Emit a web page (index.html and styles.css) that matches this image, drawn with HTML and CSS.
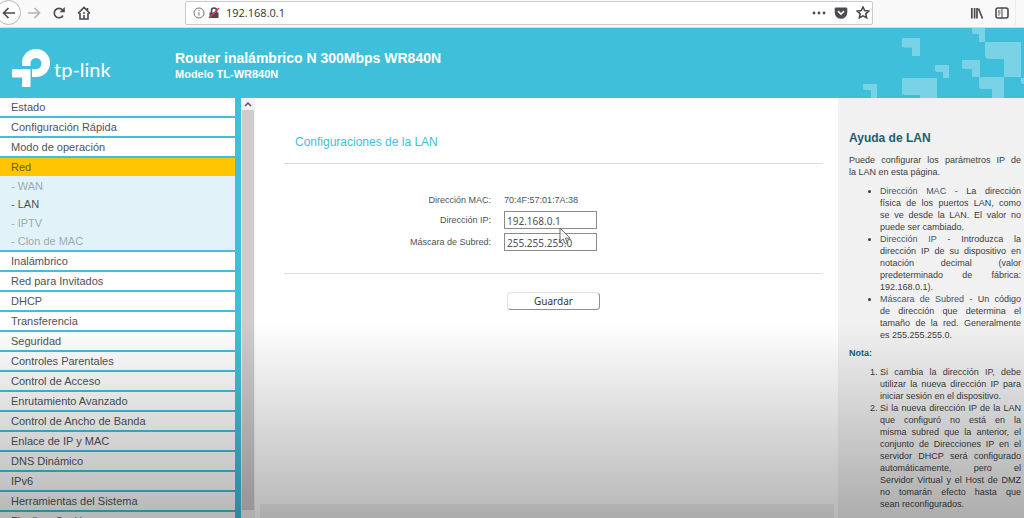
FILE: index.html
```html
<!DOCTYPE html>
<html lang="es">
<head>
<meta charset="utf-8">
<title>TL-WR840N</title>
<link rel="stylesheet" href="styles.css">
</head>
<body>
<div class="window">
  <div class="toolbar">
    <div class="nav">
      <button class="icon-button back" aria-label="Atrás"><svg width="14" height="14" viewBox="0 0 14 14"><path d="M13 7H2M6.500 2L1.500 7l5 5"/></svg></button>
      <button class="icon-button forward" aria-label="Adelante"><svg width="14" height="14" viewBox="0 0 14 14"><path d="M1 7h11M7.500 2l5 5-5 5"/></svg></button>
      <button class="icon-button" aria-label="Recargar"><svg width="14" height="14" viewBox="0 0 14 14"><path d="M11 9.500A4.700 4.700 0 1 1 10.500 4"/><path class="solid" d="M12.800 1v5.300H7.500z"/></svg></button>
      <button class="icon-button" aria-label="Inicio"><svg width="14" height="14" viewBox="0 0 14 14"><path d="M1 7.500L7 1.500l6 6M3 7v6h8V7M7 9v4M10.500 2v2"/><path d="M6 7h2"/></svg></button>
    </div>
    <div class="address">
      <svg width="12" height="12" viewBox="0 0 12 12" class="info"><circle cx="6" cy="6" r="5"/><path d="M6 5.300v3.400M6 3v1.200"/></svg>
      <svg width="12" height="12" viewBox="0 0 12 12"><path class="solid" d="M1.500 5.500h9V11h-9z"/><path d="M3.500 6V3.500a2.500 2.500 0 0 1 5 0V6"/><path class="strike" d="M1 11L11 1"/></svg>
      <input class="url" aria-label="Dirección" value="192.168.0.1">
      <button class="icon-button small" aria-label="Acciones"><svg width="14" height="12" viewBox="0 0 14 12"><circle class="solid" cx="2" cy="6" r="1.400"/><circle class="solid" cx="7" cy="6" r="1.400"/><circle class="solid" cx="12" cy="6" r="1.400"/></svg></button>
      <button class="icon-button small" aria-label="Pocket"><svg width="14" height="12" viewBox="0 0 14 12"><path class="solid" d="M2 .5h10q1.300 0 1.300 1.300V5.500a6.200 6.200 0 0 1-12.600 0V1.800Q.700.500 2 .5z"/><path class="notch" d="M4 4.200l3 2.900 3-2.900"/></svg></button>
      <button class="icon-button small" aria-label="Marcador"><svg width="14" height="13" viewBox="0 0 14 13"><path d="M7 1l1.700 3.600 4 .5-2.900 2.700.8 4L7 9.900l-3.600 1.900.8-4L1.300 5.100l4-.5z"/></svg></button>
    </div>
    <div class="tools">
      <button class="icon-button small" aria-label="Biblioteca"><svg width="14" height="12" viewBox="0 0 14 12"><path class="thick" d="M1.800 1v10.500M4.600 1v10.500M7 1v10.500M8.500 1.500l4 10"/></svg></button>
      <button class="icon-button small" aria-label="Barra lateral"><svg width="14" height="12" viewBox="0 0 14 12"><rect x="1" y="1" width="12" height="10" rx="2"/><path class="thin" d="M7 1v10M3 4h2.500M3 6h2.500M3 8h1.500"/></svg></button>
    </div>
  </div>

  <header class="banner">
    <div class="logo">
      <svg width="38" height="39" viewBox="0 0 38 39"><path d="M10 17V14a14 14 0 1 1 14 14H20V20h4a5.500 5.500 0 1 0-5.500-5.500V17z"/><path d="M1 20h17.500v17.300q0 .7-.7.7h-7.100q-.7 0-.7-.7V28.500H1q-1 0-1-1V21q0-1 1-1z"/></svg>
      <span class="wordmark">tp-link</span>
    </div>
    <div class="titles">
      <h1>Router inalámbrico N 300Mbps WR840N</h1>
      <p>Modelo TL-WR840N</p>
    </div>
    <svg class="pattern" width="164" height="70" viewBox="0 0 164 70"><path d="M42 11q0-1 1-1h17v18h-8v-8.500h-8q-2 0-2-2zM3 57q0-1 1-1h13v14h-6v-8H5q-2 0-2-2zM42 51q0-1 1-1h34v20H60v-3H45q-3 0-3-3zM75 38q0-1 1-1h13v13h-6v-6h-6q-2 0-2-2zM102 33q0-1 1-1h17v17h-8v-8h-8q-2 0-2-2zM112 0h13v14h-6V6h-5q-2 0-2-2zM125 15q0-1 1-1h35v35h-17V31h-15q-4 0-4-4zM119 50q0-1 1-1h24v21h-12V61h-10q-3 0-3-3zM161 50h3v6h-1q-2 0-2-2z"/></svg>
  </header>

  <div class="page">
    <nav class="menu">
      <a href="#">Estado</a>
      <a href="#">Configuración Rápida</a>
      <a href="#">Modo de operación</a>
      <a href="#" class="selected">Red</a>
      <div class="submenu">
        <a href="#">- WAN</a>
        <a href="#" class="current">- LAN</a>
        <a href="#">- IPTV</a>
        <a href="#">- Clon de MAC</a>
      </div>
      <a href="#">Inalámbrico</a>
      <a href="#">Red para Invitados</a>
      <a href="#">DHCP</a>
      <a href="#">Transferencia</a>
      <a href="#">Seguridad</a>
      <a href="#">Controles Parentales</a>
      <a href="#">Control de Acceso</a>
      <a href="#">Enrutamiento Avanzado</a>
      <a href="#">Control de Ancho de Banda</a>
      <a href="#">Enlace de IP y MAC</a>
      <a href="#">DNS Dinámico</a>
      <a href="#">IPv6</a>
      <a href="#">Herramientas del Sistema</a>
      <a href="#">Finalizar Sesión</a>
    </nav>
    <div class="scrollbar">
      <svg width="12" height="12" viewBox="0 0 12 12"><path d="M3 8l3-3 3 3"/></svg>
      <div class="thumb"></div>
    </div>
    <main class="content">
      <form class="settings">
        <h2>Configuraciones de la LAN</h2>
        <div class="fields">
          <span class="label">Dirección MAC:</span>
          <span class="value">70:4F:57:01:7A:38</span>
          <label class="label" for="ip">Dirección IP:</label>
          <div class="field">
            <input id="ip" value="192.168.0.1">
            <svg class="pointer" width="12" height="19" viewBox="0 0 12 19"><path d="M1 1v14l3.200-3 2 4.800 2.200-1-2-4.600H11z"/></svg>
          </div>
          <label class="label" for="mask">Máscara de Subred:</label>
          <div class="field"><input id="mask" value="255.255.255.0"></div>
        </div>
        <div class="actions"><button type="button" class="save">Guardar</button></div>
      </form>
      <div class="status"></div>
    </main>
    <aside class="help">
      <h2>Ayuda de LAN</h2>
      <p class="lines">Puede configurar los parámetros IP de <span class="end">la LAN en esta página.</span></p>
      <ul class="lines">
        <li><b>Dirección MAC</b> - La dirección<br>física de los puertos LAN, como<br>se ve desde la LAN. El valor no <span class="end">puede ser cambiado.</span></li>
        <li><b>Dirección IP</b> - Introduzca la<br>dirección IP de su dispositivo en<br>notación decimal (valor<br>predeterminado de fábrica: <span class="end">192.168.0.1).</span></li>
        <li><b>Máscara de Subred</b> - Un código<br>de dirección que determina el<br>tamaño de la red. Generalmente <span class="end">es 255.255.255.0.</span></li>
      </ul>
      <h3>Nota:</h3>
      <ol class="lines">
        <li>Si cambia la dirección IP, debe<br>utilizar la nueva dirección IP para <span class="end">iniciar sesión en el dispositivo.</span></li>
        <li>Si la nueva dirección IP de la LAN<br>que configuró no está en la<br>misma subred que la anterior, el<br>conjunto de Direcciones IP en el<br>servidor DHCP será configurado<br>automáticamente, pero el<br>Servidor Virtual y el Host de DMZ<br>no tomarán efecto hasta que <span class="end">sean reconfigurados.</span></li>
      </ol>
      <p>De clic en el botón de Guardar</p>
    </aside>
  </div>
  <div class="shade"></div>
</div>
</body>
</html>
```

FILE: styles.css
```css
* { box-sizing: border-box; }
body { margin: 0; font-family: "Liberation Sans", Arial, sans-serif; color: #4c5358; }
h1, h2, h3, p, ul, ol { margin: 0; }
button, input { font: inherit; color: inherit; }

.window { position: relative; display: flex; flex-direction: column; height: 100vh; overflow: hidden; }

.toolbar { display: flex; align-items: center; height: 28px; flex: none; padding-bottom: 2px; background: #f9f9fa; border-bottom: 1px solid #d5dcdf; }
.nav { display: flex; align-items: center; gap: 11px; width: 185px; flex: none; }
.icon-button { display: flex; align-items: center; justify-content: center; width: 14px; height: 14px; padding: 0; border: 0; background: none; flex: none; }
.icon-button.back { width: 25px; height: 25px; margin-left: -4px; margin-right: -5px; border: 1px solid #b9b9b9; border-radius: 50%; background: #fdfdfd; }
.toolbar svg { fill: none; stroke: #4a4a4f; stroke-width: 1.6; }
.toolbar .forward svg { stroke: #b4b4b6; }
.toolbar .solid { fill: #4a4a4f; stroke: none; }
.toolbar .strike { stroke: #dd3850; }
.toolbar .notch { stroke: #fff; }
.toolbar .thick { stroke-width: 1.7; }
.toolbar .thin { stroke-width: 1; }
.toolbar .info { stroke: #747478; stroke-width: 1; }
.address { display: flex; align-items: center; gap: 3px; flex: 1; height: 24px; padding: 0 2px 0 7px; background: #fff; border: 1px solid #cacaca; border-radius: 2px; }
.url { flex: 1; min-width: 0; padding: 0 3px; border: 0; background: none; font-family: "Open Sans", sans-serif; font-size: 11px; color: #333; }
.address .small { margin-left: 5px; }
.tools { display: flex; align-items: center; gap: 11px; width: 143px; height: 25px; margin-right: 8px; padding-left: 97px; flex: none; border-right: 1px solid #ececec; }

.banner { display: flex; flex: none; height: 70px; background: #40bfda; color: #fff; }
.logo { display: flex; width: 175px; padding: 21px 0 0 12px; gap: 4px; flex: none; }
.logo svg { fill: #fff; flex: none; }
.wordmark { padding-top: 7px; font-family: Lato, sans-serif; font-size: 20px; line-height: 26px; }
.titles { flex: 1; padding-top: 22px; }
.titles h1 { font-size: 14px; line-height: 17px; }
.titles p { font-size: 11px; line-height: 15px; font-weight: bold; }
.pattern { fill: #79d2e6; flex: none; }

.page { display: flex; flex: 1; min-height: 0; background: #40bfda; }
.menu { width: 235px; flex: none; overflow: hidden; font-size: 11px; }
.menu > a { display: block; height: 20px; padding-left: 11px; line-height: 18px; color: #4c5358; background: #fff; border-bottom: 2px solid #40bfda; text-decoration: none; }
.menu > .selected { height: 18px; background: #ffc600; color: #685922; border: 0; }
.submenu { display: flex; flex-direction: column; justify-content: space-between; height: 76px; padding: 1px 0 0; background: #e1f3f8; border-bottom: 2px solid #40bfda; }
.submenu a { padding-left: 11px; line-height: 18px; color: #9babb1; text-decoration: none; }
.submenu .current { color: #4c5358; }

.scrollbar { display: flex; flex-direction: column; width: 14px; margin-left: 6px; padding: 0 1px 8px; flex: none; background: #f1f1f1; }
.scrollbar svg { fill: none; stroke: #555; stroke-width: 1.5; flex: none; }
.thumb { flex: 1; background: #cdcdcd; }

.content { display: flex; flex-direction: column; justify-content: space-between; flex: 1; background: #fff; }
.settings { padding: 34px 15px 0 29px; font-size: 9px; }
.settings h2 { padding: 0 0 11px 11px; font-size: 12px; line-height: 20px; font-weight: normal; color: #40bfda; border-bottom: 1px solid #dcdcdc; }
.fields { display: grid; grid-template-columns: 207px 93px; column-gap: 13px; padding: 26px 0 19px; border-bottom: 1px solid #dcdcdc; }
.label, .value { line-height: 20px; }
.label { text-align: right; }
.field { position: relative; height: 22px; padding-top: 1px; }
.field input { display: block; width: 93px; height: 18px; padding: 2px 2px 0; border: 1px solid #8b8b8b; background: #fff; font-family: "Noto Sans", sans-serif; font-size: 10px; }
.pointer { position: absolute; left: 55px; top: 17px; z-index: 1; fill: #fffc; stroke: #65656b; }
.actions { display: flex; padding: 18px 0 0 223px; }
.save { width: 93px; height: 18px; padding: 0; font-family: "Noto Sans", sans-serif; font-size: 10px; line-height: 16px; color: #333; background: #fff; border: 1px solid #e0e0e0; border-right-color: #8e8e8e; border-bottom-color: #8e8e8e; border-radius: 4px; }
.status { height: 14px; margin: 0 4px 0 5px; background: #f0f0f0; }

.help { width: 186px; flex: none; overflow: hidden; padding: 30px 3px 0 11px; background: #f1f1f1; color: #3c3c3c; font-size: 9px; line-height: 12px; }
.help h2 { font-size: 12px; line-height: 20px; color: #20606f; }
.help p { padding-top: 6px; }
.help ul, .help ol { padding: 7px 0 0 31px; }
.help b { font-weight: normal; color: #40566a; }
.help h3 { padding-top: 6px; font-size: 9px; line-height: 12px; color: #20606f; }
.lines { text-align: justify; text-align-last: justify; }
.end { display: block; text-align-last: left; }

.shade { position: absolute; left: 0; right: 0; bottom: 0; height: 38%; background: linear-gradient(#0000, #00000048); pointer-events: none; }
```
